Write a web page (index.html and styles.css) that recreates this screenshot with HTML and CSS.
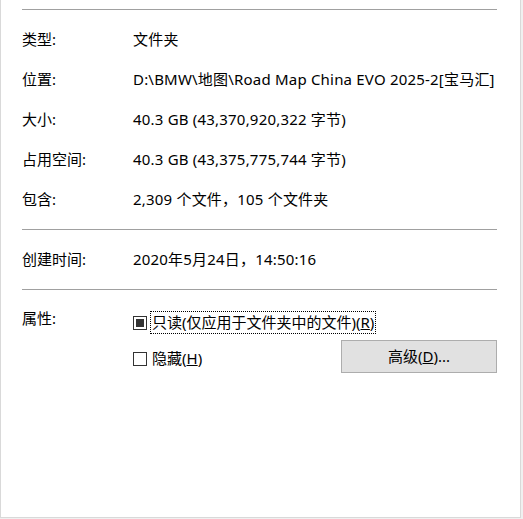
FILE: index.html
```html
<!DOCTYPE html>
<html lang="zh-CN">
<head>
    <meta charset="UTF-8">
    <title>属性</title>
    <link rel="stylesheet" href="styles.css">
</head>
<body>
    <div class="panel">
        <div class="sep"></div>

        <div class="info">
            <div class="row"><span class="label">类型:</span><span class="value">文件夹</span></div>
            <div class="row"><span class="label">位置:</span><span class="value">D:\BMW\地图\Road Map China EVO 2025-2[宝马汇]</span></div>
            <div class="row"><span class="label">大小:</span><span class="value">40.3 GB (43,370,920,322 字节)</span></div>
            <div class="row"><span class="label">占用空间:</span><span class="value">40.3 GB (43,375,775,744 字节)</span></div>
            <div class="row"><span class="label">包含:</span><span class="value">2,309 个文件，105 个文件夹</span></div>
        </div>

        <div class="sep"></div>

        <div class="info">
            <div class="row"><span class="label">创建时间:</span><span class="value">2020年5月24日，14:50:16</span></div>
        </div>

        <div class="sep"></div>

        <div class="attrs">
            <span class="label attr-label">属性:</span>
            <div class="attr-body">
                <label class="check focused">
                    <span class="box mixed"></span>
                    <span class="check-text">只读(仅应用于文件夹中的文件)(<u>R</u>)</span>
                </label>
                <div class="attr-line">
                    <label class="check hidden-check">
                        <span class="box"></span>
                        <span class="check-text">隐藏(<u>H</u>)</span>
                    </label>
                    <button class="advanced">高级(<u>D</u>)...</button>
                </div>
            </div>
        </div>
    </div>
</body>
</html>
```

FILE: styles.css
```css
html, body {
    margin: 0;
    padding: 0;
}

body {
    background: #f0f0f0;
    font-family: "Noto Sans", "Noto Sans CJK SC", sans-serif;
    font-size: 15px;
    color: #000;
}

.panel {
    width: 521px;
    height: 518px;
    background: #fff;
    border-left: 1px solid #d9d9d9;
    border-right: 1px solid #d9d9d9;
    border-bottom: 1px solid #d9d9d9;
    padding: 9px 22px 0 21px;
    box-sizing: border-box;
}

.sep {
    height: 1px;
    background: #a0a0a0;
    width: 475px;
}

.info {
    padding: 8px 0 11px;
}

.row {
    display: flex;
    height: 40px;
    align-items: center;
    white-space: nowrap;
}

.label {
    width: 111px;
    flex: none;
}

.value {
    letter-spacing: 0.2px;
}

.attrs {
    display: flex;
    padding-top: 20px;
}

.attr-label {
    line-height: 22px;
    margin-top: -3px;
}

.attr-body {
    display: flex;
    flex-direction: column;
    gap: 7px;
    padding-top: 2px;
}

.check {
    display: flex;
    align-items: center;
    gap: 4px;
}

.check.focused .check-text {
    outline: 1px dotted #000;
    outline-offset: 0;
}

.check-text {
    line-height: 21px;
    padding: 0 1px;
}

.hidden-check {
    margin-top: 8px;
}

.box {
    width: 12px;
    height: 12px;
    border: 1px solid #333;
    background: #fff;
    display: flex;
    align-items: center;
    justify-content: center;
}

.box.mixed::after {
    content: "";
    width: 8px;
    height: 8px;
    background: #333;
}

.attr-line {
    display: flex;
    align-items: flex-start;
    justify-content: space-between;
    width: 364px;
}

.advanced {
    width: 156px;
    height: 33px;
    background: #e1e1e1;
    border: 1px solid #adadad;
    font: inherit;
    color: #000;
    padding: 0 0 2px;
}
```
